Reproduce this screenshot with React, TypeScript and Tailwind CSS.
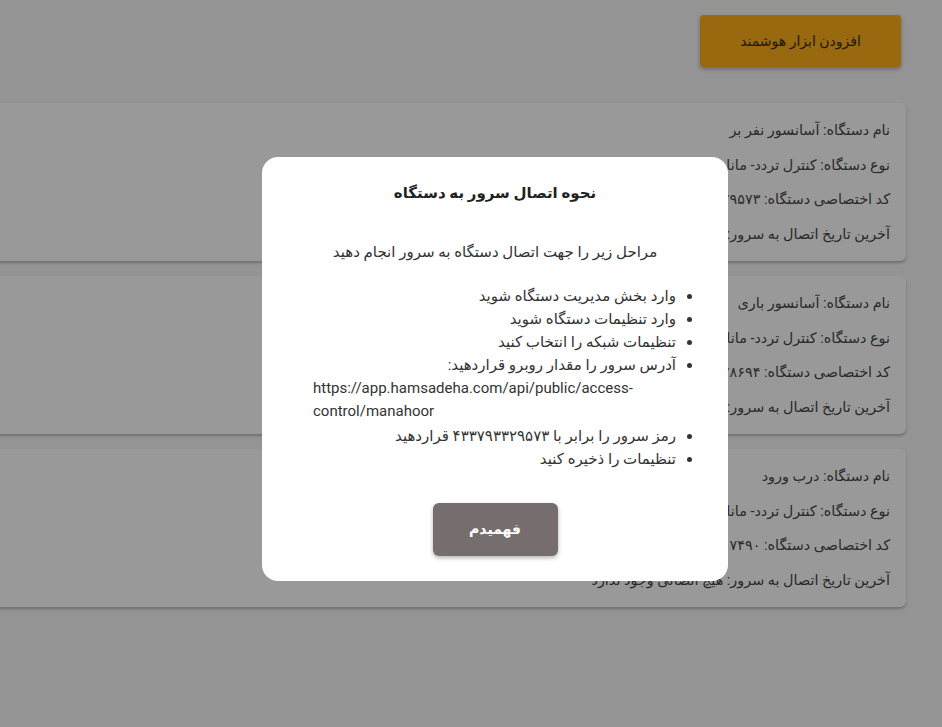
import React from 'react'

const devices = [
    {
        name: 'آسانسور نفر بر',
        type: 'کنترل تردد- مانا هور',
        code: '۴۳۳۷۹۳۳۲۹۵۷۳',
        last: 'هیچ اتصالی وجود ندارد',
    },
    {
        name: 'آسانسور باری',
        type: 'کنترل تردد- مانا هور',
        code: '۴۳۳۷۹۳۳۲۸۶۹۴',
        last: 'هیچ اتصالی وجود ندارد',
    },
    {
        name: 'درب ورود',
        type: 'کنترل تردد- مانا هور',
        code: '۴۳۳۷۹۳۳۱۷۴۹۰',
        last: 'هیچ اتصالی وجود ندارد',
    },
]

const steps = [
    'وارد بخش مدیریت دستگاه شوید',
    'وارد تنظیمات دستگاه شوید',
    'تنظیمات شبکه را انتخاب کنید',
]

export default function App() {
    return (
        <div
            dir='rtl'
            className='relative min-h-[727px] bg-[#f7f7f7] overflow-hidden'
            style={{ fontFamily: 'Roboto, "DejaVu Sans", sans-serif' }}
        >
            <div className='flex pt-[15px] pr-[41px]'>
                <button className='w-[201px] h-[52px] rounded bg-[#fdb01a] text-[#3a2a10] text-[14px] shadow-[0_2px_4px_rgba(0,0,0,0.3)]'>
                    افزودن ابزار هوشمند
                </button>
            </div>

            <div className='flex flex-col gap-[15px] mt-[36px] mr-[36px] -ml-[20px]'>
                {devices.map((d) => (
                    <div
                        key={d.name}
                        className='bg-white rounded-md h-[158px] pt-[17px] pr-[16px] shadow-[0_2px_3px_rgba(0,0,0,0.25)] text-[#474747] text-[14.4px]'
                    >
                        <p className='h-[34.5px]'>نام دستگاه: {d.name}</p>
                        <p className='h-[34.5px]'>نوع دستگاه: {d.type}</p>
                        <p className='h-[34.5px]'>کد اختصاصی دستگاه: {d.code}</p>
                        <p className='h-[34.5px]'>آخرین تاریخ اتصال به سرور: {d.last}</p>
                    </div>
                ))}
            </div>

            {/* modal */}
            <div className='absolute inset-0 bg-black/40 flex items-start justify-start pt-[157px] pl-[262px]' dir='ltr'>
                <div dir='rtl' className='w-[466px] h-[424px] bg-white rounded-2xl flex flex-col items-center pt-[24px] text-[#333]'>
                    <h2 className='text-[15px] font-bold text-[#222] leading-[24px]'>نحوه اتصال سرور به دستگاه</h2>
                    <p className='mt-[35px] text-[15px] leading-[24px]'>مراحل زیر را جهت اتصال دستگاه به سرور انجام دهید</p>
                    <ul className='mt-[21px] w-full pr-[52px] pl-[51px] text-[15px] leading-[23px] list-disc'>
                        {steps.map((s) => (
                            <li key={s}>{s}</li>
                        ))}
                        <li>
                            <span className='block'>آدرس سرور را مقدار روبرو قراردهید:</span>
                            <span dir='ltr' className='block text-left'>
                                https://app.hamsadeha.com/api/public/access-control/manahoor
                            </span>
                        </li>
                        <li className='mt-[2px]'>رمز سرور را برابر با ۴۳۳۷۹۳۳۲۹۵۷۳ قراردهید</li>
                        <li>تنظیمات را ذخیره کنید</li>
                    </ul>
                    <button className='mt-[32px] w-[125px] h-[53px] rounded-md bg-[#766e6e] text-white font-bold text-[14px] shadow-[0_2px_4px_rgba(0,0,0,0.3)]'>
                        فهمیدم
                    </button>
                </div>
            </div>
        </div>
    )
}
